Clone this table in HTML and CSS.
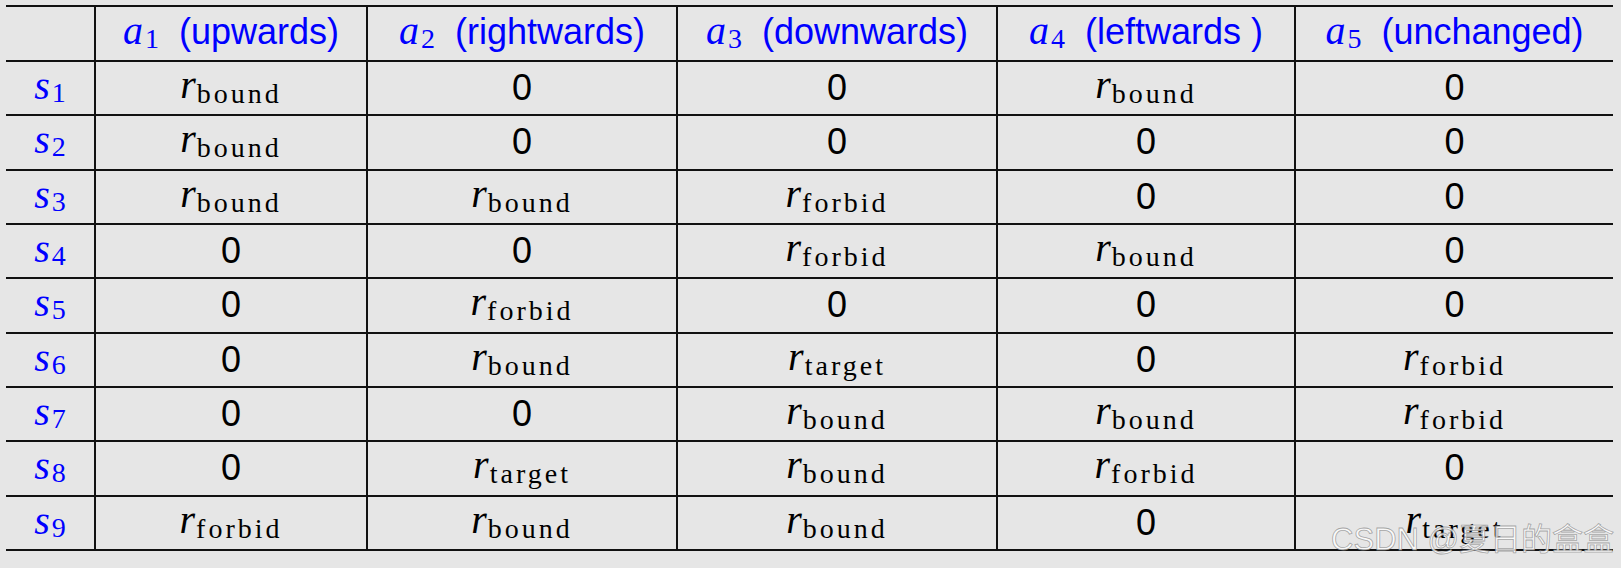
FILE: index.html
```html
<!DOCTYPE html>
<html lang="en">
<head>
<meta charset="utf-8">
<title>Reward table</title>
<link rel="stylesheet" href="styles.css">
</head>
<body>
<div class="page">
  <div class="tbl">
    <div class="c h"></div>
    <div class="c h"><span class="m">a<span class="hs">1</span></span><span class="t">(upwards)</span></div>
    <div class="c h"><span class="m">a<span class="hs">2</span></span><span class="t">(rightwards)</span></div>
    <div class="c h"><span class="m">a<span class="hs">3</span></span><span class="t">(downwards)</span></div>
    <div class="c h"><span class="m">a<span class="hs">4</span></span><span class="t">(leftwards )</span></div>
    <div class="c h"><span class="m">a<span class="hs">5</span></span><span class="t">(unchanged)</span></div>

    <div class="c s"><span class="m">s<span class="ss">1</span></span></div>
    <div class="c"><span class="m">r<span class="rs">bound</span></span></div>
    <div class="c">0</div>
    <div class="c">0</div>
    <div class="c"><span class="m">r<span class="rs">bound</span></span></div>
    <div class="c">0</div>

    <div class="c s"><span class="m">s<span class="ss">2</span></span></div>
    <div class="c"><span class="m">r<span class="rs">bound</span></span></div>
    <div class="c">0</div>
    <div class="c">0</div>
    <div class="c">0</div>
    <div class="c">0</div>

    <div class="c s"><span class="m">s<span class="ss">3</span></span></div>
    <div class="c"><span class="m">r<span class="rs">bound</span></span></div>
    <div class="c"><span class="m">r<span class="rs">bound</span></span></div>
    <div class="c"><span class="m">r<span class="rs">forbid</span></span></div>
    <div class="c">0</div>
    <div class="c">0</div>

    <div class="c s"><span class="m">s<span class="ss">4</span></span></div>
    <div class="c">0</div>
    <div class="c">0</div>
    <div class="c"><span class="m">r<span class="rs">forbid</span></span></div>
    <div class="c"><span class="m">r<span class="rs">bound</span></span></div>
    <div class="c">0</div>

    <div class="c s"><span class="m">s<span class="ss">5</span></span></div>
    <div class="c">0</div>
    <div class="c"><span class="m">r<span class="rs">forbid</span></span></div>
    <div class="c">0</div>
    <div class="c">0</div>
    <div class="c">0</div>

    <div class="c s"><span class="m">s<span class="ss">6</span></span></div>
    <div class="c">0</div>
    <div class="c"><span class="m">r<span class="rs">bound</span></span></div>
    <div class="c"><span class="m">r<span class="rs">target</span></span></div>
    <div class="c">0</div>
    <div class="c"><span class="m">r<span class="rs">forbid</span></span></div>

    <div class="c s"><span class="m">s<span class="ss">7</span></span></div>
    <div class="c">0</div>
    <div class="c">0</div>
    <div class="c"><span class="m">r<span class="rs">bound</span></span></div>
    <div class="c"><span class="m">r<span class="rs">bound</span></span></div>
    <div class="c"><span class="m">r<span class="rs">forbid</span></span></div>

    <div class="c s"><span class="m">s<span class="ss">8</span></span></div>
    <div class="c">0</div>
    <div class="c"><span class="m">r<span class="rs">target</span></span></div>
    <div class="c"><span class="m">r<span class="rs">bound</span></span></div>
    <div class="c"><span class="m">r<span class="rs">forbid</span></span></div>
    <div class="c">0</div>

    <div class="c s"><span class="m">s<span class="ss">9</span></span></div>
    <div class="c"><span class="m">r<span class="rs">forbid</span></span></div>
    <div class="c"><span class="m">r<span class="rs">bound</span></span></div>
    <div class="c"><span class="m">r<span class="rs">bound</span></span></div>
    <div class="c">0</div>
    <div class="c"><span class="m">r<span class="rs">target</span></span></div>
  </div>
  <div class="wm">CSDN @夏日的盒盒</div>
</div>
</body>
</html>
```

FILE: styles.css
```css
html, body {
  margin: 0;
  padding: 0;
  background: #e6e6e6;
}

.page {
  position: relative;
  width: 1621px;
  height: 568px;
  padding: 5px 0 0 6px;
  box-sizing: border-box;
  overflow: hidden;
}

.tbl {
  display: grid;
  grid-template-columns: 90px 272px 310px 320px 298px 317px;
  grid-template-rows: 55px repeat(9, 54.33px);
  width: 1607px;
  border-top: 2px solid #111;
  font-family: "Liberation Sans", Arial, sans-serif;
  font-size: 36px;
  color: #000;
}

.c {
  border-bottom: 2px solid #111;
  border-right: 2px solid #111;
  text-align: center;
  line-height: 52px;
  white-space: nowrap;
  box-sizing: border-box;
}

.c:nth-child(6n) {
  border-right: none;
}

.h {
  color: #0000ff;
  line-height: 50px;
}

.h .t {
  margin-left: 20px;
}

.m {
  font-family: "Liberation Serif", "Times New Roman", serif;
  font-style: italic;
  font-size: 40px;
  line-height: 0;
  vertical-align: 2px;
}

.h .m {
  vertical-align: 0;
}

.s {
  color: #0000ff;
}

.s .m {
  vertical-align: 1px;
}

.hs, .ss, .rs {
  font-family: "Liberation Serif", "Times New Roman", serif;
  font-style: normal;
  line-height: 0;
}

.hs {
  font-size: 28px;
  vertical-align: -4px;
  margin-left: 2px;
}

.ss {
  font-size: 28px;
  vertical-align: -3px;
  margin-left: 2px;
}

.rs {
  font-size: 28px;
  vertical-align: -5px;
  margin-left: 1px;
  letter-spacing: 3px;
}

.wm {
  position: absolute;
  right: 7px;
  bottom: 13px;
  font-family: "Liberation Sans", "Noto Sans CJK SC", sans-serif;
  font-size: 31px;
  line-height: 1;
  color: rgba(255, 255, 255, 0.8);
  -webkit-text-stroke: 0.8px rgba(130, 130, 130, 0.7);
  white-space: nowrap;
}
```
